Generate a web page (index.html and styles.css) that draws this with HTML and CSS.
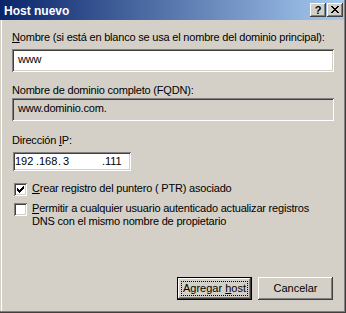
FILE: index.html
```html
<!DOCTYPE html>
<html lang="es">
<head>
<meta charset="utf-8">
<title>Host nuevo</title>
<link rel="stylesheet" href="styles.css">
</head>
<body>
<div class="window">
  <div class="titlebar">
    <span class="title">Host nuevo</span>
    <div class="caption-btns">
      <div class="cap cap-help">?</div>
      <div class="cap cap-close">
        <svg width="8" height="7" viewBox="0 0 8 7" shape-rendering="crispEdges"><path d="M0 0h2v1h-2zM6 0h2v1h-2zM1 1h2v1h-2zM5 1h2v1h-2zM2 2h4v1h-4zM3 3h2v1h-2zM2 4h4v1h-4zM1 5h2v1h-2zM5 5h2v1h-2zM0 6h2v1h-2zM6 6h2v1h-2z" fill="#000"/></svg>
      </div>
    </div>
  </div>
  <div class="content">
    <label class="label l1"><u>N</u>ombre (si está en blanco se usa el nombre del dominio principal):</label>
    <div class="edit e1">www</div>
    <label class="label l2">Nombre de dominio completo (FQDN):</label>
    <div class="edit e2 readonly">www.dominio.com.</div>
    <label class="label l3">Dirección <u>I</u>P:</label>
    <div class="ipbox">
      <span class="ipf f1">192</span><span class="dot">.</span><span class="ipf f2">168</span><span class="dot">.</span><span class="ipf f3">3</span><span class="dot">.</span><span class="ipf f4">111</span>
    </div>
    <div class="check c1">
      <div class="box">
        <svg width="7" height="7" viewBox="0 0 7 7" shape-rendering="crispEdges"><path d="M0 2h1v3h-1zM1 3h1v3h-1zM2 4h1v3h-1zM3 3h1v3h-1zM4 2h1v3h-1zM5 1h1v3h-1zM6 0h1v3h-1z" fill="#000"/></svg>
      </div>
      <span class="ctext"><u>C</u>rear registro del puntero ( PTR) asociado</span>
    </div>
    <div class="check c2">
      <div class="box"></div>
      <span class="ctext"><u>P</u>ermitir a cualquier usuario autenticado actualizar registros<br>DNS con el mismo nombre de propietario</span>
    </div>
    <div class="buttons">
      <button class="btn btn-default"><span class="focus"><span class="btext">Agregar <u>h</u>ost</span></span></button>
      <button class="btn"><span class="plain"><span class="btext">Cancelar</span></span></button>
    </div>
  </div>
</div>
</body>
</html>
```
FILE: styles.css
```css
html, body {
  margin: 0;
  padding: 0;
  background: #d4d0c8;
}
body {
  font-family: "Liberation Sans", Arial, sans-serif;
  font-size: 11px;
  letter-spacing: -0.2px;
  color: #000;
}
.window {
  width: 346px;
  height: 313px;
  box-sizing: border-box;
  background: #d4d0c8;
  border-right: 1px solid #404040;
  border-bottom: 1px solid #404040;
  box-shadow: inset -1px -1px 0 #808080, inset 1px 0 0 #d4d0c8, inset 2px 0 0 #ffffff;
  display: flex;
  flex-direction: column;
}
.titlebar {
  height: 20px;
  margin-right: 1px;
  padding: 0 1px 0 4px;
  background: linear-gradient(to right, #0a246a, #a6caf0);
  display: flex;
  justify-content: space-between;
  align-items: flex-start;
}
.title {
  color: #fff;
  font-weight: bold;
  font-size: 12px;
  letter-spacing: 0;
  line-height: 14px;
  margin-top: 4px;
}
.caption-btns {
  display: flex;
  gap: 1px;
  margin-top: 3px;
}
.cap {
  width: 16px;
  height: 14px;
  box-sizing: border-box;
  background: #d4d0c8;
  box-shadow: inset -1px -1px 0 #404040, inset 1px 1px 0 #ffffff, inset -2px -2px 0 #808080, inset 2px 2px 0 #d4d0c8;
  display: flex;
  align-items: center;
  justify-content: center;
}
.cap-help {
  font-weight: bold;
  font-size: 11px;
  letter-spacing: 0;
  line-height: 12px;
  padding-bottom: 1px;
}
.cap-close svg {
  display: block;
  margin-left: -1px;
  margin-top: -1px;
}
.content {
  flex: 1;
  display: flex;
  flex-direction: column;
  padding-left: 12px;
}
.label {
  display: block;
  line-height: 13px;
}
.l1 { margin-top: 11px; }
.l2 { margin-top: 12px; }
.l3 { margin-top: 13px; }
.edit {
  width: 322px;
  height: 23px;
  box-sizing: border-box;
  padding: 4px 6px 0 6px;
  line-height: 13px;
  background: #fff;
  box-shadow: inset 1px 1px 0 #808080, inset -1px -1px 0 #ffffff, inset 2px 2px 0 #404040, inset -2px -2px 0 #d4d0c8;
}
.e1 { margin-top: 5px; }
.e2 { margin-top: 1px; }
.edit.readonly {
  background: #d4d0c8;
}
.ipbox {
  width: 118px;
  height: 19px;
  box-sizing: border-box;
  margin-top: 5px;
  margin-left: 1px;
  padding: 3px 0 0 2px;
  line-height: 13px;
  letter-spacing: 0;
  background: #fff;
  box-shadow: inset 1px 1px 0 #808080, inset -1px -1px 0 #ffffff, inset 2px 2px 0 #404040, inset -2px -2px 0 #d4d0c8;
  display: flex;
  white-space: nowrap;
}
.ipf { display: inline-block; }
.f1 { width: 21px; }
.f2 { width: 19px; }
.f3 { width: 41px; padding-left: 2px; box-sizing: border-box; }
.dot { display: inline-block; width: 3px; }
.check {
  display: flex;
  align-items: flex-start;
  gap: 5px;
  margin-left: 2px;
  line-height: 13px;
}
.c1 { margin-top: 11px; }
.c2 { margin-top: 6px; }
.box {
  width: 13px;
  height: 13px;
  flex: none;
  margin-top: 1px;
  box-sizing: border-box;
  background: #fff;
  box-shadow: inset 1px 1px 0 #808080, inset -1px -1px 0 #ffffff, inset 2px 2px 0 #404040, inset -2px -2px 0 #d4d0c8;
  display: flex;
  align-items: center;
  justify-content: center;
}
.box svg { display: block; }
.buttons {
  display: flex;
  justify-content: flex-end;
  gap: 6px;
  margin-top: 49px;
  margin-right: 12px;
}
.btn {
  appearance: none;
  -webkit-appearance: none;
  border: 0;
  margin: 0;
  width: 75px;
  height: 23px;
  box-sizing: border-box;
  padding: 0;
  background: #d4d0c8;
  font: inherit;
  letter-spacing: 0;
  color: #000;
  display: flex;
  box-shadow: inset -1px -1px 0 #404040, inset 1px 1px 0 #ffffff, inset -2px -2px 0 #808080, inset 2px 2px 0 #d4d0c8;
}
.btn-default {
  border: 1px solid #000;
  padding: 3px;
}
.focus, .plain {
  flex: 1;
  display: flex;
  align-items: center;
  justify-content: center;
  line-height: 13px;
}
.focus {
  border: 1px dotted #000;
}
.btext {
  white-space: nowrap;
}
```
